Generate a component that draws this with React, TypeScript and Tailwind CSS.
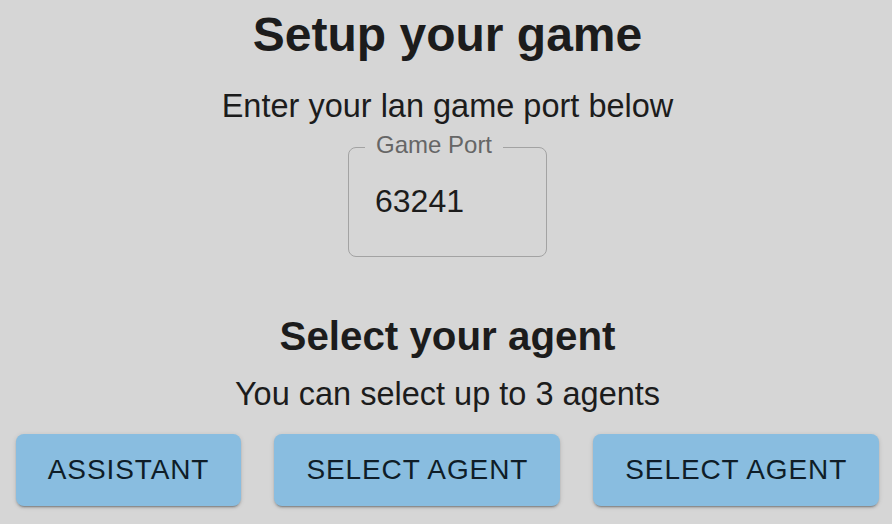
const font = { fontFamily: '"Liberation Sans", Arial, sans-serif' };

function AgentButton({ label }: { label: string }) {
  return (
    <button className="h-[72px] px-[32px] rounded-[8px] bg-[#89bde0] text-[#0f1d28] text-[28px] leading-[72px] tracking-[0.9px] uppercase shadow-[0_3px_1px_-2px_rgba(0,0,0,0.2),0_2px_2px_0_rgba(0,0,0,0.14),0_1px_5px_0_rgba(0,0,0,0.12)]">
      {label}
    </button>
  );
}

export default function App() {
  return (
    <div
      className="min-h-screen bg-[#d6d6d6] text-[#1c1c1c] flex flex-col items-center overflow-hidden pl-[3px]"
      style={font}
    >
      <h1 className="mt-[7px] text-[48px] leading-[56px] font-bold">Setup your game</h1>
      <p className="mt-[23px] text-[32.5px] leading-[40px]">Enter your lan game port below</p>

      <div className="relative mt-[21px] w-[199px] h-[110px] border border-[#a3a3a3] rounded-[8px]">
        <span className="absolute top-[-17px] left-[16px] px-[11px] bg-[#d6d6d6] text-[24px] leading-[28px] text-[#666666]">
          Game Port
        </span>
        <div className="pl-[26px] pt-[33px] text-[32px] leading-[40px] text-[#1c1c1c]">63241</div>
      </div>

      <h2 className="mt-[56px] text-[40.3px] leading-[48px] font-bold">Select your agent</h2>
      <p className="mt-[13px] text-[32.5px] leading-[40px]">You can select up to 3 agents</p>

      <div className="mt-[20px] flex gap-[33px]">
        <AgentButton label="Assistant" />
        <AgentButton label="Select agent" />
        <AgentButton label="Select agent" />
      </div>
    </div>
  );
}
